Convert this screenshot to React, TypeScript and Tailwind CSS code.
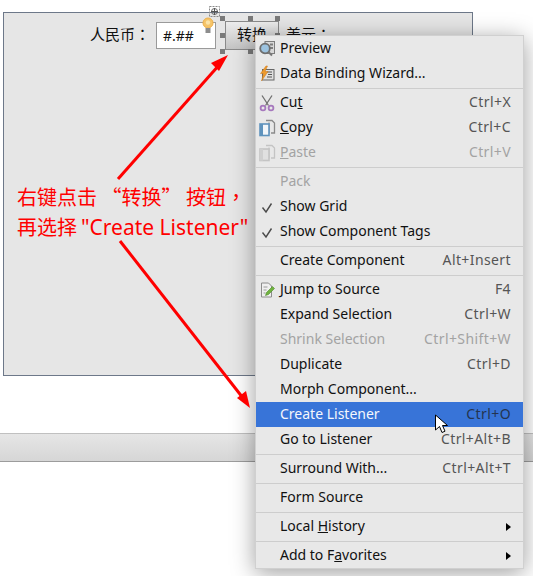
const sans = "font-['Noto_Sans','Noto_Sans_CJK_SC',sans-serif]";

type Row = {
  label: React.ReactNode;
  keys?: string;
  off?: boolean;
  active?: boolean;
  check?: boolean;
  sub?: boolean;
  icon?: React.ReactNode;
};

const PreviewIcon = () => (
  <svg width="18" height="18" viewBox="0 0 18 18" fill="none">
    <rect x="7" y="1.500" width="9.500" height="12" fill="#d8d8d8" stroke="#7d7d7d" />
    <rect x="12" y="3.500" width="3" height="2" fill="#7d7d7d" />
    <rect x="12" y="7" width="3" height="2" fill="#7d7d7d" />
    <circle cx="7" cy="8.500" r="4.800" fill="#9cc3e0" stroke="#6e6e6e" strokeWidth="1.800" />
    <path d="M10.500 12l3.500 3.500" stroke="#777" strokeWidth="2" />
  </svg>
);

const WizardIcon = () => (
  <svg width="18" height="18" viewBox="0 0 18 18" fill="none">
    <rect x="4.500" y="4.500" width="11.500" height="10.500" fill="#e0e0e0" stroke="#666" />
    <path d="M9 7h5M10 9.500h4M9 12h5" stroke="#555" />
    <path d="M8 1L2.500 8.500h3L3.500 16 10 6.500H7L9.500 1z" fill="#ee9b2d" stroke="#c9761a" strokeWidth=".5" />
  </svg>
);

const CutIcon = () => (
  <svg width="18" height="18" viewBox="0 0 18 18" fill="none">
    <path d="M4 1.500l6.500 10M14 1.500L7.500 11.500" stroke="#6f6f6f" strokeWidth="1.300" />
    <circle cx="5" cy="14" r="2.400" stroke="#a678bd" strokeWidth="1.800" />
    <circle cx="13" cy="14" r="2.400" stroke="#a678bd" strokeWidth="1.800" />
  </svg>
);

const CopyIcon = ({ off }: { off?: boolean }) => (
  <svg width="18" height="18" viewBox="0 0 18 18" fill="none">
    <path d="M8 1.500h6l2.500 2.500v10H13" stroke={off ? "#c4c4c4" : "#8a8a8a"} strokeWidth="1.300" />
    <path d="M11 3.500v11" stroke={off ? "#c4c4c4" : "#8a8a8a"} strokeWidth="1.300" />
    <rect x="2" y="5" width="9" height="11.500" fill={off ? "#e0e0e0" : "#f2f6fa"} stroke={off ? "#c4c4c4" : "#5f93bd"} strokeWidth="1.600" />
    <rect x="2" y="5" width="3" height="11.500" fill={off ? "#cfcfcf" : "#5f93bd"} />
  </svg>
);

const JumpIcon = () => (
  <svg width="18" height="18" viewBox="0 0 18 18" fill="none">
    <path d="M3.500 2h7l3 3v11h-10z" fill="#efefef" stroke="#8c8c8c" />
    <path d="M5.500 6h4M5.500 9h3M5.500 12h2" stroke="#9a9a9a" />
    <path d="M7.500 14.500l1-3 6-6 2 2-6 6z" fill="#6fb23f" stroke="#4f8c28" strokeWidth=".6" />
  </svg>
);

const Check = () => (
  <svg className="mt-[3px]" width="12" height="12" viewBox="0 0 12 12" fill="none">
    <path d="M1.500 5.500L5 10l5.500-8.500" stroke="#4a4a4a" strokeWidth="1.400" />
  </svg>
);

const groups: Row[][] = [
  [
    { label: "Preview", icon: <PreviewIcon /> },
    { label: "Data Binding Wizard...", icon: <WizardIcon /> },
  ],
  [
    { label: <>Cu<u>t</u></>, keys: "Ctrl+X", icon: <CutIcon /> },
    { label: <><u>C</u>opy</>, keys: "Ctrl+C", icon: <CopyIcon /> },
    { label: <><u>P</u>aste</>, keys: "Ctrl+V", off: true, icon: <CopyIcon off /> },
  ],
  [
    { label: "Pack", off: true },
    { label: "Show Grid", check: true },
    { label: "Show Component Tags", check: true },
  ],
  [{ label: "Create Component", keys: "Alt+Insert" }],
  [
    { label: "Jump to Source", keys: "F4", icon: <JumpIcon /> },
    { label: "Expand Selection", keys: "Ctrl+W" },
    { label: "Shrink Selection", keys: "Ctrl+Shift+W", off: true },
    { label: "Duplicate", keys: "Ctrl+D" },
    { label: "Morph Component..." },
    { label: "Create Listener", keys: "Ctrl+O", active: true },
    { label: "Go to Listener", keys: "Ctrl+Alt+B" },
  ],
  [{ label: "Surround With...", keys: "Ctrl+Alt+T" }],
  [{ label: "Form Source" }],
  [{ label: <>Local <u>H</u>istory</>, sub: true }],
  [{ label: <>Add to F<u>a</u>vorites</>, sub: true }],
];

function MenuRow({ row }: { row: Row }) {
  const labelColor = row.active ? "text-[#f4f7fc]" : row.off ? "text-[#a3a3a3]" : "text-[#111]";
  const keyColor = row.active ? "text-[#24344f]" : row.off ? "text-[#a3a3a3]" : "text-[#555]";
  return (
    <div className={`flex h-[25px] items-center pr-3 ${row.active ? "bg-[#3874d8]" : ""}`}>
      <div className="flex w-6 shrink-0 items-center justify-center pr-[2px]">
        {row.icon}
        {row.check && <Check />}
      </div>
      <span className={`flex-1 pb-[3px] ${labelColor}`}>{row.label}</span>
      {row.keys && <span className={`pb-[2px] tracking-[0.4px] ${keyColor}`}>{row.keys}</span>}
      {row.sub && <span className="h-0 w-0 border-y-[4px] border-l-[5px] border-y-transparent border-l-black" />}
    </div>
  );
}

function Menu() {
  return (
    <div className="absolute left-[255px] top-[35px] w-[269px] border border-[#d0d0d0] bg-[#e8e8e8] text-[14px] shadow-[0_4px_22px_rgba(0,0,0,0.38)]">
      {groups.map((group, i) => (
        <div key={i}>
          {i > 0 && (
            <div className="flex h-1 items-center">
              <div className="h-px w-full bg-[#cdcdcd]" />
            </div>
          )}
          {group.map((row, j) => (
            <MenuRow key={j} row={row} />
          ))}
        </div>
      ))}
    </div>
  );
}

const handles = [
  "left-[220px] top-[16px]",
  "left-[248px] top-[16px]",
  "left-[275px] top-[16px]",
  "left-[220px] top-[33px]",
  "left-[275px] top-[33px]",
  "left-[220px] top-[49px]",
  "left-[248px] top-[49px]",
];

export default function App() {
  return (
    <div className={`relative h-[576px] w-[533px] overflow-hidden bg-white ${sans}`}>
      <div className="ml-[3px] mt-[12px] h-[364px] w-[470px] border border-[#6d7889] bg-[#e6e6e6]">
        <div className="mt-[9px] flex h-[27px] items-center pl-[86px] text-[15px] text-[#111]">
          <span className="w-[66px] pb-[2px] font-['Noto_Sans_CJK_TC',sans-serif]">人民币：</span>
          <div className="flex h-[27px] w-[60px] items-center border border-[#9a9a9a] bg-white pb-[1px] pl-[6px] text-[14px]">#.##</div>
          <button className="ml-[9px] h-[29px] w-[54px] border border-[#8a8a8a] bg-gradient-to-b from-[#ececec] to-[#c4c4c4] pb-[2px] text-[15px]">转换</button>
          <span className="ml-[7px] pb-[2px] font-['Noto_Sans_CJK_TC',sans-serif]">美元：</span>
        </div>
        <div className="pl-[13px] pt-[132px] text-[20px] leading-[32px] text-[#ff0000]">
          <p className="font-['Noto_Sans_CJK_TC',sans-serif]">右键点击 “转换” 按钮，</p>
          <p className="-mt-[2px]">再选择<span className="ml-[4px] text-[21px]">"Create Listener"</span></p>
        </div>
      </div>

      <div className="mt-[57px] h-[29px] border-y border-b-[#9c9c9c] border-t-[#c0c0c0] bg-gradient-to-b from-[#e6e6e6] to-[#d6d6d6]" />

      {handles.map((pos) => (
        <div key={pos} className={`absolute h-[5px] w-[5px] bg-[#7a7a7a] ${pos}`} />
      ))}

      <svg className="absolute left-[209px] top-[6px]" width="11" height="11" viewBox="0 0 11 11" fill="none">
        <rect x=".5" y=".5" width="10" height="10" stroke="#8a8a8a" strokeDasharray="2 1" />
        <circle cx="5.500" cy="5.500" r="3" stroke="#666" />
        <path d="M5.500 2v7M2 5.500h7" stroke="#555" />
      </svg>

      <svg className="absolute left-[201px] top-[17px]" width="14" height="17" viewBox="0 0 14 17" fill="none">
        <circle cx="7" cy="6" r="5" fill="#f5c469" stroke="#eeb04a" />
        <circle cx="7" cy="5.500" r="2.200" fill="#fbe3a8" />
        <rect x="4.500" y="11" width="5" height="5" fill="#8d8d8d" />
      </svg>

      <Menu />

      <svg className="pointer-events-none absolute left-0 top-0" width="533" height="576" viewBox="0 0 533 576" fill="none">
        <path d="M118 179L220 64" stroke="#ff0000" strokeWidth="3" />
        <path d="M228 55l-17 8 8 8z" fill="#ff0000" />
        <path d="M120 241L243 398" stroke="#ff0000" strokeWidth="3" />
        <path d="M250 408l-4-17-9 7z" fill="#ff0000" />
      </svg>

      <svg className="absolute left-[434px] top-[414px]" width="15" height="21" viewBox="0 0 15 21" fill="none">
        <path d="M1.500 1v15l4-3.500 2.500 6 3-1.300-2.500-5.700h5z" fill="#fff" stroke="#000" />
      </svg>
    </div>
  );
}
